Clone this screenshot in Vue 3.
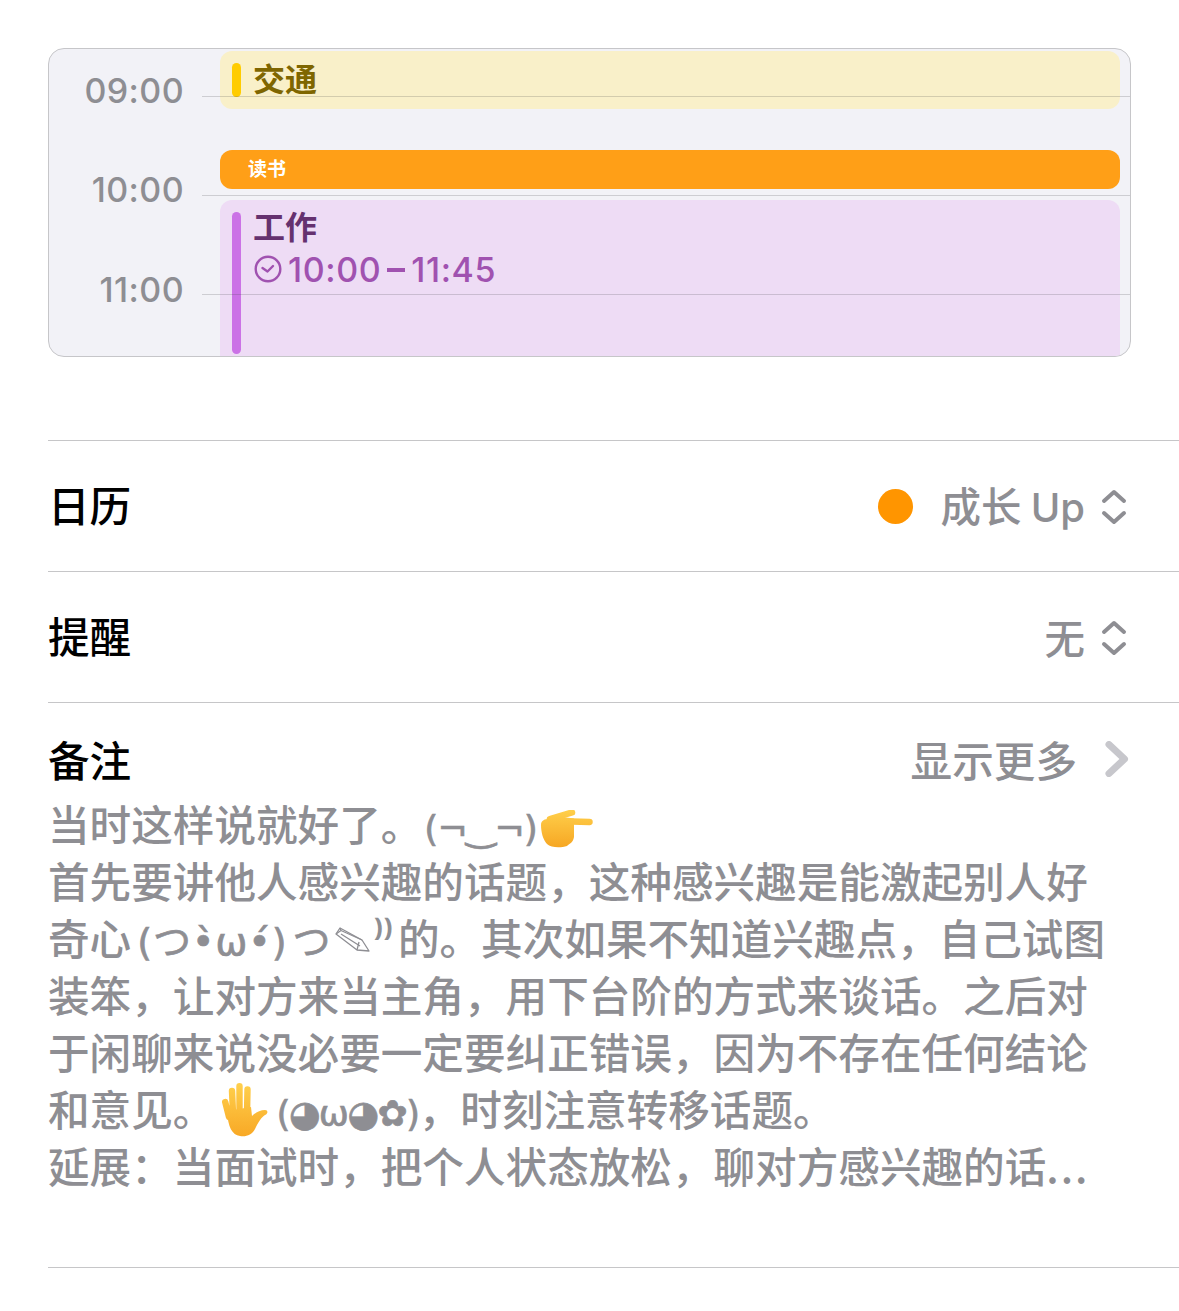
<script setup>
const hours = ['09:00', '10:00', '11:00']
const lineTops = [47, 146, 245]
</script>

<template>
  <div class="page">
    <div class="calendar">
      <div v-for="h in hours" :key="h" class="hour">
        <span class="hour-label">{{ h }}</span>
      </div>

      <div class="event traffic">
        <i class="bar"></i>
        <b class="event-title">交通</b>
      </div>
      <div class="event reading">读书</div>
      <div class="event work">
        <i class="bar"></i>
        <div>
          <b class="event-title">工作</b>
          <div class="event-time">
            <svg width="28" height="28" viewBox="0 0 28 28" fill="none" stroke="#a052b0" stroke-width="2.4">
              <circle cx="14" cy="14" r="12.3" />
              <path d="M8.5 13 13.5 16.5 19 11" stroke-linecap="round" stroke-linejoin="round" />
            </svg>
            <span>10:00</span><span class="dash"></span><span>11:45</span>
          </div>
        </div>
      </div>

      <div v-for="t in lineTops" :key="t" class="hour-line" :style="{ top: t + 'px' }"></div>
    </div>

    <div class="row">
      <span class="label">日历</span>
      <span class="value">
        <i class="dot"></i>
        <span>成长 <span class="latin">Up</span></span>
        <svg class="updown" width="26" height="36" viewBox="0 0 26 36" fill="none" stroke="#8e8e93" stroke-width="4" stroke-linecap="round" stroke-linejoin="round">
          <path d="M3 12 13 3 23 12" />
          <path d="M3 24 13 33 23 24" />
        </svg>
      </span>
    </div>

    <div class="row">
      <span class="label">提醒</span>
      <span class="value">
        <span>无</span>
        <svg class="updown" width="26" height="36" viewBox="0 0 26 36" fill="none" stroke="#8e8e93" stroke-width="4" stroke-linecap="round" stroke-linejoin="round">
          <path d="M3 12 13 3 23 12" />
          <path d="M3 24 13 33 23 24" />
        </svg>
      </span>
    </div>

    <div class="notes">
      <div class="notes-head">
        <span class="label">备注</span>
        <span class="value more">
          <span>显示更多</span>
          <svg width="24" height="36" viewBox="0 0 24 36" fill="none" stroke="#c7c7cc" stroke-width="7" stroke-linecap="round" stroke-linejoin="round">
            <path d="M4 3.5 19.5 18 4 32.5" />
          </svg>
        </span>
      </div>
      <div class="note-body">
        <div class="line">当时这样说就好了。<span class="kao">(¬‿¬)</span><svg class="emoji point" width="52" height="38" viewBox="0 0 52 38">
            <defs>
              <linearGradient id="pointFill" gradientUnits="userSpaceOnUse" x1="0" y1="0" x2="0" y2="38">
                <stop offset="0" stop-color="#ffcf4a" />
                <stop offset="1" stop-color="#f6a623" />
              </linearGradient>
            </defs>
            <path d="M9 9 31 2.5M31 11.5 48.5 12" stroke="url(#pointFill)" stroke-width="6.5" stroke-linecap="round" fill="none" />
            <path d="M0 15C0 10 4 9 8 9L14 6 33 8.5 33 27C32 33 28 34 26 36 20 38 10 38 6 34 2 30 0 22 0 15Z" fill="url(#pointFill)" />
          </svg></div>
        <div class="line">首先要讲他人感兴趣的话题，这种感兴趣是能激起别人好</div>
        <div class="line">奇心<span class="kao wide">(つ•̀ω•́)</span><span class="kao wide tsu">つ</span><svg class="pencil" width="35" height="25" viewBox="0 0 35 25" fill="#fff" stroke="#8e8e93" stroke-width="1.3" stroke-linejoin="round">
            <path d="M1 7 5 1 27 13 34 24 22 23 1 7Z" />
            <path d="M1 7 6 3.5 27 13M6 3.5 5 1M24 15 22 23M6 7 25 19" fill="none" />
          </svg><span class="paren">⁾⁾</span>的。其次如果不知道兴趣点，自己试图</div>
        <div class="line">装笨，让对方来当主角，用下台阶的方式来谈话。之后对</div>
        <div class="line">于闲聊来说没必要一定要纠正错误，因为不存在任何结论</div>
        <div class="line">和意见。<svg class="emoji hand" width="46" height="54" viewBox="0 0 46 54">
            <defs>
              <linearGradient id="handFill" gradientUnits="userSpaceOnUse" x1="0" y1="0" x2="0" y2="54">
                <stop offset="0" stop-color="#ffd04d" />
                <stop offset="1" stop-color="#f8a825" />
              </linearGradient>
            </defs>
            <path d="M3.2 19 7 34M10 8 11 30M17.5 3.2 17.5 30M25.5 6.5 25 30" stroke="url(#handFill)" stroke-width="6.4" stroke-linecap="round" fill="none" />
            <path d="M5 28 29 24 30 33C33 30 38 27 43 27 46 27 46 30 44 31.5 39 34 36 40 33 46 30 52 24 54 18 53 10 52 6 44 5 28Z" fill="url(#handFill)" />
          </svg><span class="kao hand-kao">(◕ω◕✿)</span>，时刻注意转移话题。</div>
        <div class="line">延展：当面试时，把个人状态放松，聊对方感兴趣的话<span class="dots">...</span></div>
      </div>
    </div>
  </div>
</template>

<style scoped>
.page {
  width: 1179px;
  height: 1311px;
  padding-top: 48px;
  padding-left: 48px;
  box-sizing: border-box;
  background: #fff;
  overflow: hidden;
  font-family: "Noto Sans CJK SC", "Noto Sans", sans-serif;
}

.calendar {
  position: relative;
  width: 1083px;
  height: 309px;
  box-sizing: border-box;
  border: 1px solid #c6c6c9;
  border-radius: 16px;
  background: #f2f2f7;
  overflow: hidden;
  margin-bottom: 83px;
}

.hour {
  height: 99.4px;
  width: 135px;
  display: flex;
  justify-content: flex-end;
  align-items: flex-start;
  padding-top: 21px;
  box-sizing: border-box;
}

.hour-label {
  font-family: Inter, sans-serif;
  font-size: 34px;
  line-height: 41px;
  font-weight: 500;
  letter-spacing: 0.4px;
  color: #8e8e93;
}

.hour-line {
  position: absolute;
  left: 153px;
  right: 0;
  height: 1px;
  background: rgba(60, 60, 67, 0.2);
}

.event {
  position: absolute;
  left: 171px;
  width: 900px;
  box-sizing: border-box;
  border-radius: 12px;
}

.bar {
  display: block;
  width: 9px;
  border-radius: 5px;
  flex: none;
}

.event-title {
  font-size: 32px;
  font-weight: 700;
}

.traffic {
  top: 2px;
  height: 58px;
  background: #f9f0c9;
  display: flex;
  padding: 12px 0 0 12px;
  gap: 12px;
  color: #7f6600;
}
.traffic .bar {
  height: 34px;
  background: #ffcc00;
}
.traffic .event-title {
  line-height: 28px;
}

.reading {
  top: 101px;
  height: 39px;
  background: #ff9f17;
  color: #fff;
  font-size: 19px;
  font-weight: 700;
  line-height: 36px;
  padding-left: 28px;
}

.work {
  top: 151px;
  height: 170px;
  background: #eedcf5;
  display: flex;
  padding: 12px 0 0 12px;
  gap: 12px;
  color: #65316f;
}
.work .bar {
  height: 142px;
  background: #cb72e6;
}
.work .event-title {
  display: block;
  line-height: 26px;
}

.event-time {
  display: flex;
  align-items: center;
  margin-top: 10px;
  margin-left: 1px;
  height: 42px;
  font-family: Inter, sans-serif;
  font-size: 34px;
  font-weight: 500;
  letter-spacing: 0.6px;
  color: #a052b0;
}
.event-time svg {
  margin-right: 6px;
}
.dash {
  display: block;
  width: 18px;
  height: 4px;
  margin: 2px 6px 0;
  background: #a052b0;
}

.row {
  height: 131px;
  border-top: 1px solid #c6c6c8;
  box-sizing: border-box;
  display: flex;
  align-items: center;
  justify-content: space-between;
  padding: 0 52px 4px 0;
}

.label {
  font-size: 41.6px;
  line-height: 54px;
  font-weight: 500;
  color: #000;
}

.value {
  display: flex;
  align-items: center;
  font-size: 41.6px;
  line-height: 54px;
  font-weight: 500;
  color: #8e8e93;
}

.row .value {
  font-size: 40.5px;
  margin-top: 4px;
}

.latin {
  font-family: Inter, sans-serif;
  font-size: 40px;
}

.dot {
  display: block;
  width: 35px;
  height: 35px;
  border-radius: 50%;
  background: #ff9500;
  margin-right: 28px;
}

.row .updown {
  margin: 2px 0 0 16px;
}

.notes {
  border-top: 1px solid #c6c6c8;
  border-bottom: 1px solid #c6c6c8;
  height: 566px;
  box-sizing: border-box;
  padding: 29px 50px 0 0;
}

.notes-head {
  display: flex;
  align-items: center;
  justify-content: space-between;
  height: 54px;
}

.more svg {
  margin-left: 28px;
}

.note-body {
  margin-top: 9px;
  font-size: 41.6px;
  line-height: 57px;
  font-weight: 500;
  color: #8e8e93;
  white-space: nowrap;
}

.line {
  height: 57px;
}

.kao {
  font-family: "DejaVu Sans", "Noto Sans CJK SC", sans-serif;
  font-size: 36px;
  font-weight: 400;
  letter-spacing: -1px;
  margin-left: 2px;
  -webkit-text-stroke: 0.7px #8e8e93;
}

.kao.wide {
  font-size: 38px;
  letter-spacing: 1px;
  margin-left: 6px;
}

.kao.tsu {
  margin-left: 5px;
}

.pencil {
  vertical-align: 3px;
  margin-left: 3px;
}

.paren {
  font-size: 40px;
  font-weight: 700;
  line-height: 0;
  margin-left: 5px;
  margin-right: 4px;
  vertical-align: 1px;
}

.dots {
  letter-spacing: 2px;
}

.emoji {
  vertical-align: -7px;
}
.point {
  margin-left: 4px;
}
.hand {
  margin-left: 8px;
  vertical-align: -11px;
}
.kao.hand-kao {
  margin-left: 8px;
  letter-spacing: -1.5px;
}
</style>
